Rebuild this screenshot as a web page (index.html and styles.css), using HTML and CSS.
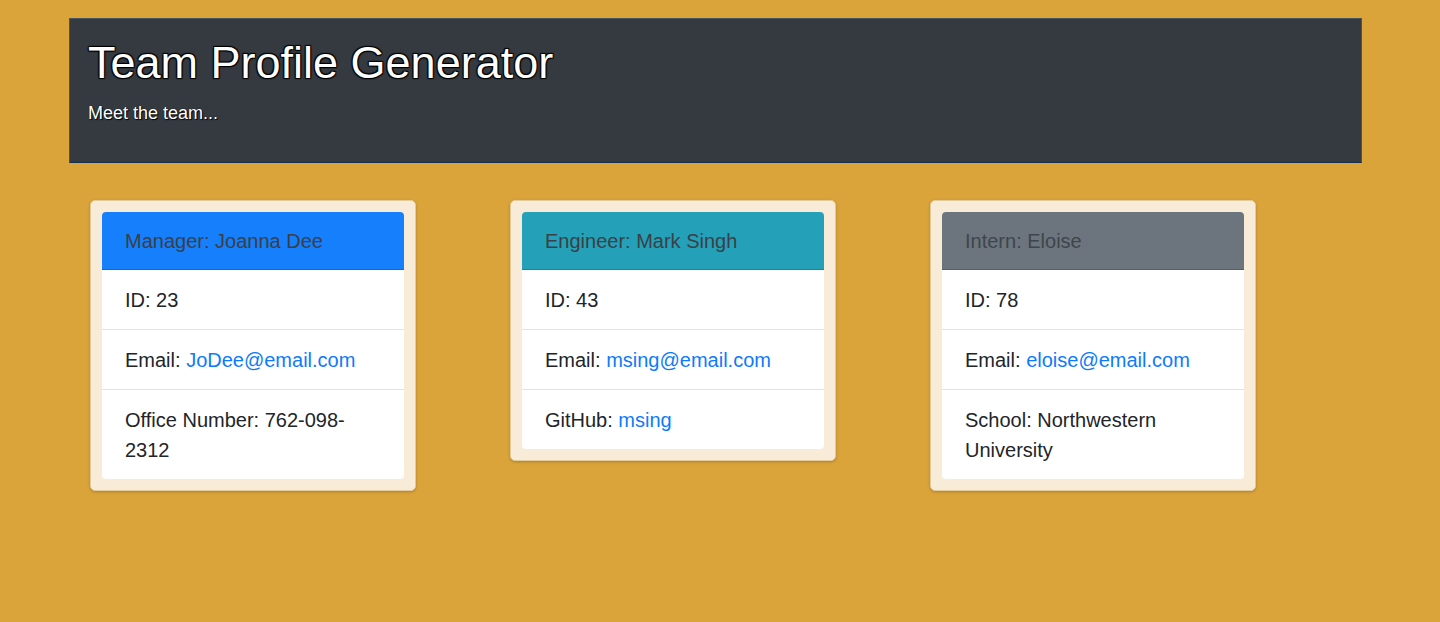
FILE: index.html
```html
<!DOCTYPE html>
<html lang="en">
<head>
<meta charset="utf-8">
<title>Team Profile Generator</title>
<link rel="stylesheet" href="styles.css">
</head>
<body>
<header class="jumbotron">
  <h1 class="title">Team Profile Generator</h1>
  <p class="lead">Meet the team...</p>
</header>
<main class="team">
  <div class="wrap">
    <div class="card">
      <div class="card-header manager">Manager: Joanna Dee</div>
      <ul class="list">
        <li class="item">ID: 23</li>
        <li class="item">Email: <a href="#">JoDee@email.com</a></li>
        <li class="item">Office Number: 762-098-2312</li>
      </ul>
    </div>
  </div>
  <div class="wrap">
    <div class="card">
      <div class="card-header engineer">Engineer: Mark Singh</div>
      <ul class="list">
        <li class="item">ID: 43</li>
        <li class="item">Email: <a href="#">msing@email.com</a></li>
        <li class="item">GitHub: <a href="#">msing</a></li>
      </ul>
    </div>
  </div>
  <div class="wrap">
    <div class="card">
      <div class="card-header intern">Intern: Eloise</div>
      <ul class="list">
        <li class="item">ID: 78</li>
        <li class="item">Email: <a href="#">eloise@email.com</a></li>
        <li class="item">School: Northwestern University</li>
      </ul>
    </div>
  </div>
</main>
</body>
</html>
```

FILE: styles.css
```css
html, body {
  margin: 0;
  padding: 0;
}
body {
  background: #daa43a;
  min-height: 622px;
  font-family: "Liberation Sans", Arial, Helvetica, sans-serif;
  color: #212529;
}
.jumbotron {
  margin: 18px 78px 0 69px;
  height: 145px;
  box-sizing: border-box;
  background: #343a40;
  border: 1px solid #4a545e;
  border-bottom-color: #14304f;
  padding: 17px 18px 0 18px;
  color: #fff;
}
.title {
  margin: 0;
  font-weight: 400;
  font-size: 45px;
  line-height: 54px;
  text-shadow: 1px 1px 1px #000, -1px -1px 1px #000, 1px -1px 1px #000, -1px 1px 1px #000;
}
.lead {
  margin: 11px 0 0 0;
  font-size: 18px;
  line-height: 24px;
  text-shadow: 0 0 1px #000, 1px 1px 1px #000;
}
.team {
  display: flex;
  align-items: flex-start;
  gap: 94px;
  margin-top: 37px;
  padding-left: 90px;
}
.wrap {
  width: 326px;
  box-sizing: border-box;
  background: #f8ecd8;
  border: 1px solid #e3cc9c;
  border-radius: 5px;
  box-shadow: 0 1px 3px rgba(0, 0, 0, 0.22);
  padding: 11px;
}
.card {
  background: #fff;
  border-radius: 4px;
  overflow: hidden;
}
.card-header {
  padding: 15px 23px 13px 23px;
  font-size: 20px;
  line-height: 29px;
  color: #3b4046;
  border-bottom: 1px solid rgba(0, 0, 0, 0.18);
}
.manager { background: #167ffc; }
.engineer { background: #24a1b8; }
.intern { background: #6c757d; color: #3e454c; }
.list {
  list-style: none;
  margin: 0;
  padding: 0;
}
.item {
  padding: 15px 23px 14px 23px;
  font-size: 20px;
  line-height: 30px;
  border-top: 1px solid #e2e2e2;
}
.item:first-child {
  border-top: 0;
}
.item a {
  color: #0d7bfb;
  text-decoration: none;
}
```
